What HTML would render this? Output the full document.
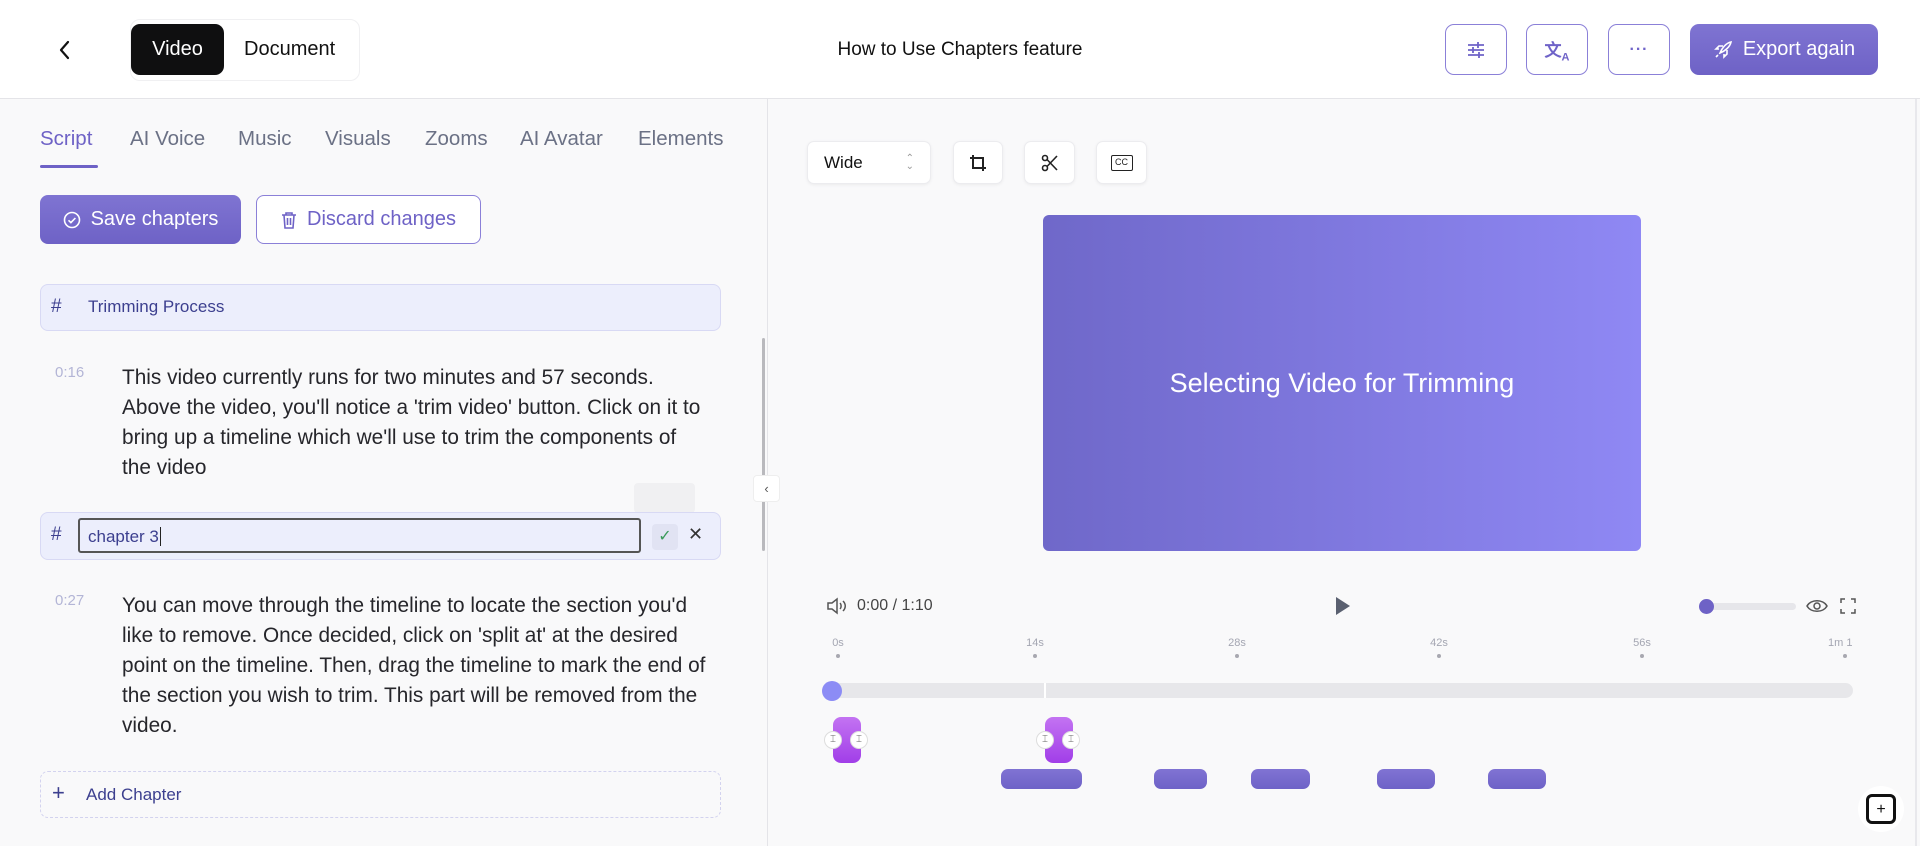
<!DOCTYPE html>
<html><head><meta charset="utf-8"><style>
*{margin:0;padding:0;box-sizing:border-box}
body{width:1920px;height:846px;overflow:hidden;background:#f9f9fa;font-family:"Liberation Sans",sans-serif;position:relative;color:#1f1f24}
.a{position:absolute}
.hdr{left:0;top:0;width:1920px;height:99px;background:#fff;border-bottom:1px solid #e4e4e8}
.ib{border:1.5px solid #8b80d8;border-radius:9px;background:#fff;display:flex;align-items:center;justify-content:center}
.tab{top:127px;font-size:20.5px;color:#6b7185}
.tb{background:#fff;border:1px solid #ececef;border-radius:7px;box-shadow:0 1px 3px rgba(0,0,0,.06);display:flex;align-items:center;justify-content:center}
.p{left:122px;width:585px;font-size:20.8px;line-height:30px;color:#26262b}
.ts{font-size:15px;color:#b3b5d6}
.tick{top:637px;font-size:11px;color:#a4a6b2;width:40px;text-align:center}
.dot{top:654px;width:4px;height:4px;border-radius:2px;background:#a8a8b0}
.clip{top:769px;height:20px;border-radius:7px;background:linear-gradient(#8073d3,#6e62c7)}
.mk{top:717px;width:28px;height:46px;border-radius:8px;background:linear-gradient(#c373f2,#a13ee8)}
.mc{top:731px;width:18px;height:18px;border-radius:9px;background:#fff;border:1px solid #ddd;font-size:10px;color:#666;text-align:center;line-height:16px}
</style></head><body>
<div class="a hdr"></div>
<svg class="a" style="left:57px;top:40px" width="16" height="20" viewBox="0 0 16 20"><path d="M11 2 L4 10 L11 18" fill="none" stroke="#111" stroke-width="2.2" stroke-linecap="round" stroke-linejoin="round"/></svg>
<div class="a" style="left:130px;top:19px;width:230px;height:62px;border:1px solid #f0f0f2;border-radius:10px;background:#fff"></div>
<div class="a" style="left:131px;top:24px;width:93px;height:51px;background:#0f0f10;border-radius:9px;color:#fff;font-size:20px;display:flex;align-items:center;justify-content:center">Video</div>
<div class="a" style="left:244px;top:38px;font-size:20px;color:#111">Document</div>
<div class="a" style="left:760px;top:39px;width:400px;text-align:center;font-size:19px;color:#111">How to Use Chapters feature</div>
<div class="a ib" style="left:1445px;top:24px;width:62px;height:51px"><svg width="20" height="18" viewBox="0 0 20 18" stroke="#6f63c8" stroke-width="1.8" fill="none"><path d="M2 4h16M2 9h16M2 14h16"/><path d="M12 1v6M7 6v6M13 11v6" /></svg></div>
<div class="a ib" style="left:1526px;top:24px;width:62px;height:51px"><span style="color:#6f63c8;font-size:17px;font-weight:bold">文<sub style="font-size:11px">A</sub></span></div>
<div class="a ib" style="left:1608px;top:24px;width:62px;height:51px"><span style="color:#6f63c8;font-size:16px;font-weight:bold;letter-spacing:1px">···</span></div>
<div class="a" style="left:1690px;top:24px;width:188px;height:51px;border-radius:9px;background:linear-gradient(#7f74d2,#6e62c6);color:#fff;font-size:20px;display:flex;align-items:center;justify-content:center;gap:10px"><svg width="20" height="20" viewBox="0 0 20 20" fill="none" stroke="#fff" stroke-width="1.6"><path d="M7 13 C9 8 13 3 18 2 C17 7 12 11 7 13Z M6 9l-3 0 3-3 4 0 M11 14l0 3 3-3 0-4 M5 15 l-2 2"/></svg>Export again</div>
<div class="a" style="left:767px;top:99px;width:1px;height:747px;background:#e4e4e8"></div>
<div class="a" style="left:1915px;top:99px;width:2px;height:747px;background:#e8e8ec"></div>
<div class="a tab" style="left:40px;color:#6e62c6">Script</div>
<div class="a" style="left:40px;top:165px;width:58px;height:3px;border-radius:2px;background:#6e62c6"></div>
<div class="a tab" style="left:130px">AI Voice</div>
<div class="a tab" style="left:238px">Music</div>
<div class="a tab" style="left:325px">Visuals</div>
<div class="a tab" style="left:425px">Zooms</div>
<div class="a tab" style="left:520px">AI Avatar</div>
<div class="a tab" style="left:638px">Elements</div>
<div class="a" style="left:40px;top:195px;width:201px;height:49px;border-radius:8px;background:linear-gradient(#7f74d2,#6e62c6);color:#fff;font-size:20px;display:flex;align-items:center;justify-content:center;gap:10px"><svg width="18" height="18" viewBox="0 0 18 18" fill="none" stroke="#fff" stroke-width="1.6"><circle cx="9" cy="9" r="7.5"/><path d="M5.5 9.3l2.4 2.3 4.5-4.6"/></svg>Save chapters</div>
<div class="a" style="left:256px;top:195px;width:225px;height:49px;border-radius:8px;border:1.5px solid #8b80d8;background:#fff;color:#6e62c6;font-size:20px;display:flex;align-items:center;justify-content:center;gap:10px"><svg width="16" height="18" viewBox="0 0 16 18" fill="none" stroke="#6e62c6" stroke-width="1.6"><path d="M1 4h14M5 4V2h6v2M3 4l1 13h8l1-13M6.5 7v7M9.5 7v7"/></svg>Discard changes</div>
<div class="a" style="left:40px;top:284px;width:681px;height:47px;border-radius:8px;background:#eceefc;border:1px solid #d8d9f4"></div>
<div class="a" style="left:51px;top:296px;font-size:19px;color:#3c3f8f">#</div>
<div class="a" style="left:88px;top:297px;font-size:17px;color:#3c3f8f">Trimming Process</div>
<div class="a ts" style="left:55px;top:364px">0:16</div>
<div class="a p" style="top:363px">This video currently runs for two minutes and 57 seconds. Above the video, you'll notice a 'trim video' button. Click on it to bring up a timeline which we'll use to trim the components of the video</div>
<div class="a" style="left:634px;top:483px;width:61px;height:30px;background:#f0f0f2;border-radius:4px"></div>
<div class="a" style="left:40px;top:512px;width:681px;height:48px;border-radius:8px;background:#eceefc;border:1px solid #d8d9f4"></div>
<div class="a" style="left:51px;top:524px;font-size:19px;color:#3c3f8f">#</div>
<div class="a" style="left:78px;top:518px;width:563px;height:35px;border:2px solid #555;border-radius:3px;background:#eceefc;font-size:17px;color:#3c3f8f;padding:7px 8px">chapter 3<span style="border-left:1px solid #222;margin-left:1px"></span></div>
<div class="a" style="left:652px;top:524px;width:26px;height:26px;background:#e1e3f3;border-radius:4px;color:#3a9a5a;font-size:16px;text-align:center;line-height:26px">✓</div>
<div class="a" style="left:688px;top:524px;font-size:18px;color:#333">✕</div>
<div class="a ts" style="left:55px;top:592px">0:27</div>
<div class="a p" style="top:591px">You can move through the timeline to locate the section you'd like to remove. Once decided, click on 'split at' at the desired point on the timeline. Then, drag the timeline to mark the end of the section you wish to trim. This part will be removed from the video.</div>
<div class="a" style="left:40px;top:771px;width:681px;height:47px;border-radius:8px;border:1px dashed #d3d3ef"></div>
<div class="a" style="left:52px;top:780px;font-size:22px;color:#3c3f8f">+</div>
<div class="a" style="left:86px;top:785px;font-size:17px;color:#3c3f8f">Add Chapter</div>
<div class="a" style="left:762px;top:338px;width:3px;height:213px;background:#b9b9bd;border-radius:2px"></div>
<div class="a" style="left:753px;top:475px;width:27px;height:27px;background:#fff;border:1px solid #eee;border-radius:4px;font-size:13px;color:#555;text-align:center;line-height:25px">‹</div>
<div class="a tb" style="left:807px;top:141px;width:124px;height:43px;justify-content:space-between;padding:0 16px"><span style="font-size:17px;color:#111">Wide</span><span style="font-size:10px;color:#999;line-height:8px">⌃<br>⌄</span></div>
<div class="a tb" style="left:953px;top:141px;width:50px;height:43px"><svg width="18" height="18" viewBox="0 0 18 18" fill="none" stroke="#222" stroke-width="2"><path d="M4 1v13h13M1 4h13v13"/></svg></div>
<div class="a tb" style="left:1024px;top:141px;width:51px;height:43px"><svg width="18" height="18" viewBox="0 0 18 18" fill="none" stroke="#222" stroke-width="1.6"><circle cx="4" cy="4" r="2.5"/><circle cx="4" cy="14" r="2.5"/><path d="M6 5.5L16 16M6 12.5L16 2"/></svg></div>
<div class="a tb" style="left:1096px;top:141px;width:51px;height:43px"><div style="width:22px;height:16px;border:1.5px solid #222;border-radius:2px;font-size:9px;text-align:center;line-height:13px;color:#222">CC</div></div>
<div class="a" style="left:1043px;top:215px;width:598px;height:336px;border-radius:6px;background:linear-gradient(90deg,#6f68c9,#8f88f4);color:#fff;font-size:27px;display:flex;align-items:center;justify-content:center">Selecting Video for Trimming</div>
<svg class="a" style="left:826px;top:597px" width="22" height="18" viewBox="0 0 22 18" fill="none" stroke="#555" stroke-width="1.5"><path d="M2 6h4l5-4v14l-5-4H2z M14 6c1.5 1.5 1.5 4.5 0 6 M17 4c3 3 3 7 0 10"/></svg>
<div class="a" style="left:857px;top:597px;font-size:16px;color:#444">0:00 / 1:10</div>
<svg class="a" style="left:1334px;top:596px" width="18" height="20"><path d="M2 1 L16 10 L2 19Z" fill="#5a6070"/></svg>
<div class="a" style="left:1704px;top:603px;width:92px;height:7px;border-radius:4px;background:#e6e6ea"></div>
<div class="a" style="left:1699px;top:599px;width:15px;height:15px;border-radius:8px;background:#6e62c6"></div>
<svg class="a" style="left:1806px;top:597px" width="22" height="18" viewBox="0 0 22 18" fill="none" stroke="#555" stroke-width="1.5"><path d="M1 9 C5 2 17 2 21 9 C17 16 5 16 1 9Z"/><circle cx="11" cy="9" r="3"/></svg>
<svg class="a" style="left:1840px;top:598px" width="16" height="16" fill="none" stroke="#555" stroke-width="1.5"><path d="M1 5V1h4M11 1h4v4M15 11v4h-4M5 15H1v-4"/></svg>
<div class="a tick" style="left:818px">0s</div><div class="a dot" style="left:836px"></div>
<div class="a tick" style="left:1015px">14s</div><div class="a dot" style="left:1033px"></div>
<div class="a tick" style="left:1217px">28s</div><div class="a dot" style="left:1235px"></div>
<div class="a tick" style="left:1419px">42s</div><div class="a dot" style="left:1437px"></div>
<div class="a tick" style="left:1622px">56s</div><div class="a dot" style="left:1640px"></div>
<div class="a" style="left:1828px;top:637px;font-size:11px;color:#a4a6b2;width:25px;overflow:hidden;white-space:nowrap">1m 10s</div><div class="a dot" style="left:1843px"></div>
<div class="a" style="left:831px;top:683px;width:1022px;height:15px;border-radius:8px;background:#e7e7ea"></div>
<div class="a" style="left:1044px;top:683px;width:2px;height:15px;background:#fff"></div>
<div class="a" style="left:822px;top:681px;width:20px;height:20px;border-radius:10px;background:#8c8cf5"></div>
<div class="a mk" style="left:833px"></div><div class="a mc" style="left:824px">⌶</div><div class="a mc" style="left:850px">⌶</div>
<div class="a mk" style="left:1045px"></div><div class="a mc" style="left:1036px">⌶</div><div class="a mc" style="left:1062px">⌶</div>
<div class="a clip" style="left:1001px;width:81px"></div>
<div class="a clip" style="left:1154px;width:53px"></div>
<div class="a clip" style="left:1251px;width:59px"></div>
<div class="a clip" style="left:1377px;width:58px"></div>
<div class="a clip" style="left:1488px;width:58px"></div>
<div class="a" style="left:1858px;top:786px;width:46px;height:46px;border-radius:23px;background:#fff"></div>
<div class="a" style="left:1866px;top:794px;width:30px;height:30px;border:3px solid #111;border-radius:6px;font-size:16px;text-align:center;line-height:26px;color:#111">+</div>
</body></html>
